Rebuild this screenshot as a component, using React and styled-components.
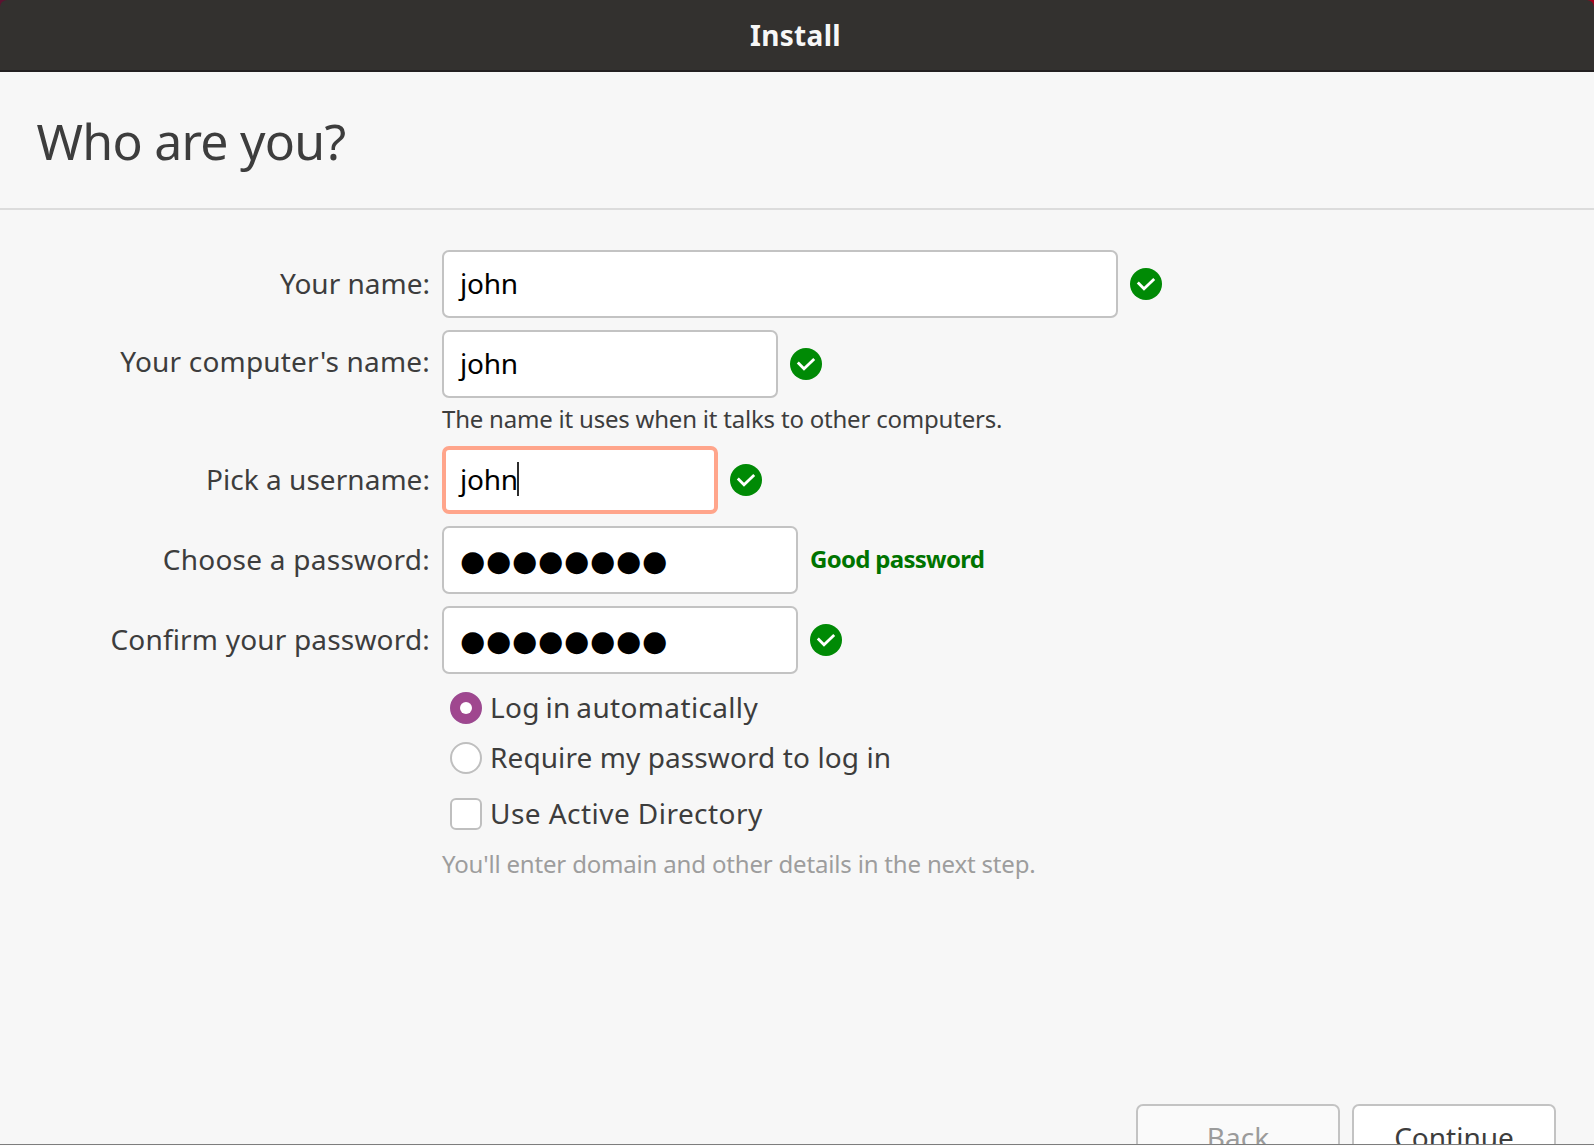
import React from "react";
import styled, { createGlobalStyle } from "styled-components";

const GlobalStyle = createGlobalStyle`
  *, *::before, *::after { box-sizing: border-box; }
  body {
    margin: 0;
    background: #fcfcfc;
    font-family: "Noto Sans", "Open Sans", sans-serif;
    font-size: 28px;
    color: #3d3d3d;
  }
`;

const Window = styled.main`
  width: 1594px;
  height: 1146px;
  display: flex;
  flex-direction: column;
  overflow: hidden;
  background: linear-gradient(90deg, #5c1230 50%, #a3001c 50%) top / 100% 12px no-repeat;
`;

const TitleBar = styled.header`
  height: 72px;
  flex: none;
  display: flex;
  justify-content: center;
  background: #33312f;
  border-bottom: 2px solid #232021;
  border-radius: 7px 7px 0 0;
  color: #f7f7f7;
  font-weight: 700;
  line-height: 70px;
  letter-spacing: 0.3px;
  padding-right: 3px;
`;

const Heading = styled.h1`
  height: 138px;
  flex: none;
  margin: 0;
  padding: 0 0 0 36.5px;
  background: #f7f7f7;
  border-bottom: 2px solid #dcdcdc;
  font-size: 50px;
  font-weight: 400;
  line-height: 138px;
  letter-spacing: -0.75px;
`;

const Body = styled.section`
  height: 935px;
  flex: none;
  display: flex;
  flex-direction: column;
  justify-content: space-between;
  overflow: hidden;
  padding-top: 40px;
  background: #f7f7f7;
  border-bottom: 1px solid #7d7d7d;
`;

const Form = styled.form`
  display: flex;
  flex-direction: column;
`;

const Row = styled.div`
  display: grid;
  grid-template-columns: 430px auto auto;
  column-gap: 12px;
  justify-content: start;
  align-items: center;
  height: 68px;
  margin-bottom: ${(p) => (p.$tight ? 0 : 12)}px;
`;

const Label = styled.label`
  text-align: right;
  white-space: nowrap;
  line-height: 38px;
  letter-spacing: ${(p) => p.$track || 0}px;
  padding-bottom: ${(p) => (p.$raise ? 6 : 2)}px;
`;

const Field = styled.div`
  width: ${(p) => p.$width}px;
  height: 68px;
  display: flex;
  align-items: center;
  padding: 0 ${(p) => (p.$focused ? 14 : 16)}px 2px;
  background: #fff;
  border: ${(p) => (p.$focused ? "4px solid #ffa58b" : "2px solid #c3c3c3")};
  border-radius: 7px;
  color: #000;
  letter-spacing: -0.2px;
`;

const Caret = styled.span`
  width: 2px;
  height: 34px;
  margin: 0 0 0 -1px;
  background: #2d2d2d;
`;

const Dots = styled.span`
  font-family: "DejaVu Sans", sans-serif;
  font-size: 29px;
  line-height: 34px;
  letter-spacing: 0.7px;
  padding-top: 3px;
`;

const Strength = styled.strong`
  color: #007400;
  font-size: 24px;
  line-height: 32px;
  letter-spacing: -0.7px;
  padding-bottom: 3px;
`;

const Hint = styled.p`
  margin: 0 0 0 442px;
  height: ${(p) => (p.$muted ? 40 : 48)}px;
  font-size: 24px;
  line-height: 41px;
  letter-spacing: ${(p) => (p.$muted ? -0.18 : -0.21)}px;
  color: ${(p) => (p.$muted ? "#9d9d9d" : "inherit")};
`;

const Options = styled.div`
  display: flex;
  flex-direction: column;
  padding: 6px 0 13px 450px;
`;

const Option = styled.label`
  height: 32px;
  display: flex;
  align-items: center;
  gap: 8px;
  margin-bottom: ${(p) => p.$after || 0}px;
  letter-spacing: ${(p) => p.$track}px;
  word-spacing: ${(p) => p.$word || 0}px;
  line-height: 32px;
`;

const OptionText = styled.span`
  padding-bottom: 2px;
`;

const Mark = styled.span`
  width: 32px;
  height: 32px;
  flex: none;
  display: grid;
  place-items: center;
  border: 2px solid ${(p) => (p.$checked ? "#9c4990" : "#bfbfbf")};
  border-radius: ${(p) => (p.$round ? "50%" : "6px")};
  background: ${(p) => (p.$checked ? "#a0478f" : "#fff")};

  &::after {
    content: "";
    width: 12px;
    height: 12px;
    border-radius: 50%;
    background: #fff;
  }
`;

const Footer = styled.footer`
  display: flex;
  justify-content: flex-end;
  gap: 12px;
  height: 40px;
  padding-right: 38px;
`;

const Button = styled.button`
  width: 204px;
  height: 68px;
  flex: none;
  padding: 0 0 2px;
  border: 2px solid #c3c3c3;
  border-radius: 7px;
  background: ${(p) => (p.disabled ? "#fafafa" : "#fff")};
  color: ${(p) => (p.disabled ? "#9b9b9b" : "#3d3d3d")};
  font: 400 28px "Noto Sans", sans-serif;
`;

const CheckSvg = styled.svg`
  display: block;
  width: 32px;
  height: 32px;
`;

function Valid() {
  return (
    <CheckSvg viewBox="0 0 32 32">
      <circle cx="16" cy="16" r="16" fill="#008a05" />
      <path d="M7.8 14.4l6.2 6.3L24.2 11" fill="none" stroke="#fff" strokeWidth="2.8" />
    </CheckSvg>
  );
}

const BULLETS = "●●●●●●●●";

export default function App() {
  return (
    <Window>
      <GlobalStyle />
      <TitleBar>Install</TitleBar>
      <Heading>Who are you?</Heading>
      <Body>
        <Form>
          <Row>
            <Label>Your name:</Label>
            <Field $width={676}>john</Field>
            <Valid />
          </Row>
          <Row $tight>
            <Label $raise $track={0.18}>Your computer's name:</Label>
            <Field $width={336}>john</Field>
            <Valid />
          </Row>
          <Hint>The name it uses when it talks to other computers.</Hint>
          <Row>
            <Label $track={0.04}>Pick a username:</Label>
            <Field $width={276} $focused>john<Caret /></Field>
            <Valid />
          </Row>
          <Row>
            <Label $track={0.25}>Choose a password:</Label>
            <Field $width={356}><Dots>{BULLETS}</Dots></Field>
            <Strength>Good password</Strength>
          </Row>
          <Row>
            <Label $track={0.18}>Confirm your password:</Label>
            <Field $width={356}><Dots>{BULLETS}</Dots></Field>
            <Valid />
          </Row>
          <Options>
            <Option $track={0.35} $word={-2} $after={18}>
              <Mark $round $checked />
              <OptionText>Log in automatically</OptionText>
            </Option>
            <Option $track={0.09} $after={24}>
              <Mark $round />
              <OptionText>Require my password to log in</OptionText>
            </Option>
            <Option $track={0.45}>
              <Mark />
              <OptionText>Use Active Directory</OptionText>
            </Option>
          </Options>
          <Hint $muted>You'll enter domain and other details in the next step.</Hint>
        </Form>
        <Footer>
          <Button disabled>Back</Button>
          <Button>Continue</Button>
        </Footer>
      </Body>
    </Window>
  );
}
